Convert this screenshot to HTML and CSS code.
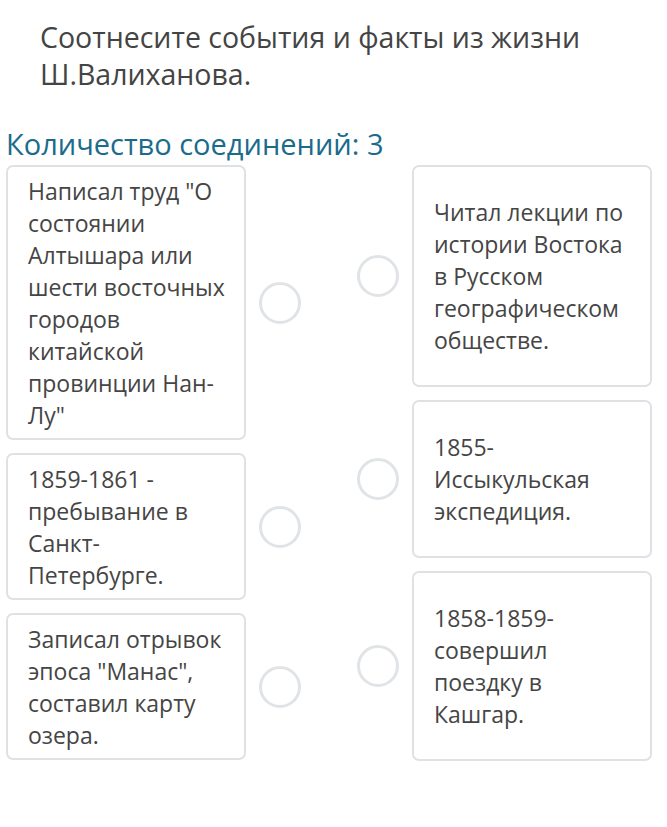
FILE: index.html
```html
<!DOCTYPE html>
<html lang="ru">
<head>
<meta charset="utf-8">
<link rel="stylesheet" href="styles.css">
</head>
<body>
<h1 class="title">Соотнесите события и факты из жизни Ш.Валиханова.</h1>
<div class="count">Количество соединений: 3</div>
<div class="board">
  <div class="col col-left">
    <div class="row">
      <div class="card card-l">Написал труд "О состоянии Алтышара или шести восточных городов китайской провинции Нан-Лу"</div>
      <span class="dot"></span>
    </div>
    <div class="row">
      <div class="card card-l">1859-1861 - пребывание в Санкт-Петербурге.</div>
      <span class="dot"></span>
    </div>
    <div class="row">
      <div class="card card-l">Записал отрывок эпоса "Манас", составил карту озера.</div>
      <span class="dot"></span>
    </div>
  </div>
  <div class="col col-right">
    <div class="row">
      <span class="dot"></span>
      <div class="card card-r">Читал лекции по истории Востока в Русском географическом обществе.</div>
    </div>
    <div class="row">
      <span class="dot"></span>
      <div class="card card-r">1855-Иссыкульская экспедиция.</div>
    </div>
    <div class="row">
      <span class="dot"></span>
      <div class="card card-r">1858-1859-совершил поездку в Кашгар.</div>
    </div>
  </div>
</div>
</body>
</html>
```
FILE: styles.css
```css
* { box-sizing: border-box; }
body {
  margin: 0;
  background: #fff;
  font-family: "Open Sans", "Noto Sans", sans-serif;
  color: #444;
}
.title {
  margin: 0;
  padding: 19px 0 0 40px;
  width: 620px;
  font-size: 28.5px;
  font-weight: 400;
  line-height: 37px;
  color: #444;
}
.count {
  margin-top: 34px;
  padding-left: 6px;
  font-size: 29px;
  line-height: 34px;
  color: #1b6b8c;
}
.board {
  display: flex;
  justify-content: space-between;
  padding: 0 15px 0 6px;
  margin-top: 4px;
}
.col {
  display: flex;
  flex-direction: column;
  gap: 13px;
}
.row {
  display: flex;
  align-items: center;
  gap: 13px;
}
.card {
  width: 240px;
  border: 2px solid #dfe2e5;
  border-radius: 7px;
  background: #fff;
  font-size: 23px;
  line-height: 32px;
  color: #454545;
}
.card-l { padding: 7.5px 16px 7.5px 20px; }
.card-r { padding: 29px 16px 29px 20px; }
.dot {
  flex: none;
  width: 42px;
  height: 42px;
  border: 3px solid #e1e4e7;
  border-radius: 50%;
}
```
